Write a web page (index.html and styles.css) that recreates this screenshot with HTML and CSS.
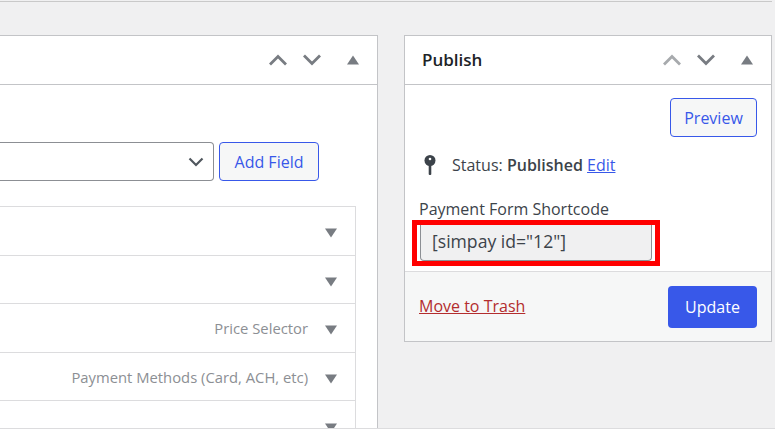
FILE: index.html
```html
<!DOCTYPE html>
<html lang="en">
<head>
<meta charset="utf-8">
<title>Payment Form</title>
<link rel="stylesheet" href="styles.css">
</head>
<body>
<div class="topline"></div>
<main class="columns">
  <section class="panel main-panel">
    <header class="panel-head">
      <div class="controls">
        <svg class="ctl" viewBox="0 0 20 12"><path d="M2 10.5 10 2.5 18 10.5" /></svg>
        <svg class="ctl" viewBox="0 0 20 12"><path d="M2 1.5 10 9.5 18 1.5" /></svg>
        <svg class="tri" viewBox="0 0 12 10"><path d="M6 .5 12 9.5H0Z" /></svg>
      </div>
    </header>
    <div class="main-body">
      <div class="field-add">
        <div class="select"><svg class="sel-chev" viewBox="0 0 16 10"><path d="M1.500 1.500 8 8 14.500 1.500" /></svg></div>
        <button class="btn btn-outline add-field">Add Field</button>
      </div>
      <div class="rows">
        <div class="row"><svg class="down" viewBox="0 0 12 10"><path d="M0 .5H12L6 9.500Z" /></svg></div>
        <div class="row"><svg class="down" viewBox="0 0 12 10"><path d="M0 .5H12L6 9.500Z" /></svg></div>
        <div class="row"><span class="row-label">Price Selector</span><svg class="down" viewBox="0 0 12 10"><path d="M0 .5H12L6 9.500Z" /></svg></div>
        <div class="row"><span class="row-label">Payment Methods (Card, ACH, etc)</span><svg class="down" viewBox="0 0 12 10"><path d="M0 .5H12L6 9.500Z" /></svg></div>
        <div class="row"><svg class="down" viewBox="0 0 12 10"><path d="M0 .5H12L6 9.500Z" /></svg></div>
      </div>
    </div>
  </section>
  <aside class="panel publish">
    <header class="panel-head">
      <h2>Publish</h2>
      <div class="controls">
        <svg class="ctl faded" viewBox="0 0 20 12"><path d="M2 10.5 10 2.5 18 10.5" /></svg>
        <svg class="ctl" viewBox="0 0 20 12"><path d="M2 1.5 10 9.5 18 1.5" /></svg>
        <svg class="tri" viewBox="0 0 12 10"><path d="M6 .5 12 9.5H0Z" /></svg>
      </div>
    </header>
    <div class="publish-body">
      <div class="preview-row"><button class="btn btn-outline preview">Preview</button></div>
      <div class="status">
        <svg class="pin" viewBox="0 0 12 20"><circle cx="6" cy="5.500" r="5.500" /><rect x="4.700" y="8" width="2.600" height="12" rx="1" /><circle class="pin-hole" cx="6" cy="4" r="1.300" /></svg>
        <span>Status: <b>Published</b> <a href="#">Edit</a></span>
      </div>
      <label class="sc-label">Payment Form Shortcode</label>
      <div class="highlight"><div class="sc-input">[simpay id="12"]</div></div>
    </div>
    <footer class="publish-foot">
      <a class="trash" href="#">Move to Trash</a>
      <button class="btn update">Update</button>
    </footer>
  </aside>
</main>
</body>
</html>
```
FILE: styles.css
```css
* { box-sizing: border-box; }
html, body { margin: 0; height: 429px; overflow: hidden; }
body {
  background: #f0f0f1;
  font-family: "Open Sans", "Noto Sans", sans-serif;
  font-size: 16px;
  color: #3c434a;
  border-bottom: 1px solid #dcdcde;
}
.topline { height: 2px; background: #c9c9c9; border-top: 1px solid #f0f0f1; margin-right: 3px; }
.columns { display: flex; align-items: flex-start; gap: 26px; padding: 33px 3px 0 0; }
.panel { background: #fff; border: 1px solid #c3c4c7; }
.main-panel { width: 378px; height: 400px; border-left: 0; border-bottom: 0; overflow: hidden; }
.publish { width: 368px; }
.panel-head {
  display: flex; align-items: center; justify-content: flex-end;
  height: 49px; padding: 0 18px 1px 17px;
  border-bottom: 1px solid #c3c4c7;
}
.panel-head h2 { margin: 0 auto 0 0; font-size: 17px; font-weight: 600; color: #1d2327; }
.controls { display: flex; align-items: center; }
.ctl { width: 20px; height: 12px; margin-right: 14px; fill: none; stroke: #787c82; stroke-width: 2.800; }
.ctl.faded { stroke: #a7aaad; }
.ctl + .ctl { margin-right: 25px; }
.tri { width: 12px; height: 10px; fill: #787c82; }
.main-body { padding: 57px 21px 0 0; }
.field-add { display: flex; gap: 5px; margin-right: 37px; }
.select {
  flex: 1; height: 39px; display: flex; align-items: center; justify-content: flex-end; padding-right: 9px;
  border: 1px solid #8c8f94; border-left: 0; border-radius: 0 4px 4px 0;
}
.sel-chev { width: 16px; height: 10px; fill: none; stroke: #50575e; stroke-width: 2.200; }
.btn { font: inherit; font-size: 16px; border-radius: 4px; height: 39px; padding: 0; }
.btn-outline { background: #f6f7f7; color: #3858e9; border: 1px solid #3858e9; }
.add-field { width: 100px; }
.rows { margin-top: 25px; border: 1px solid #dcdcde; border-left: 0; border-bottom: 0; }
.row {
  display: flex; align-items: center; justify-content: flex-end; gap: 17px;
  height: 48.600px; padding: 5px 18px 0 0; border-bottom: 1px solid #dcdcde;
  color: #8c8f94;
}
.row-label { font-size: 14.800px; margin-top: -4px; }
.down { width: 12px; height: 10px; fill: #787c82; }
.publish-body { padding: 13px 14px 0 15px; }
.preview-row { display: flex; justify-content: flex-end; }
.preview { width: 87px; }
.status { display: flex; align-items: center; gap: 16px; margin: 16px 0 0 4px; height: 24px; }
.pin { width: 12px; height: 20px; fill: #3c434a; }
.pin-hole { fill: #fff; }
.status b { font-weight: 600; }
.status a { color: #3858e9; }
.sc-label { display: block; margin: 22px 0 0 -1px; line-height: 21px; }
.highlight { width: 248px; margin: 0 0 0 -8px; height: 46px; border: 5px solid #ff0000; background: #fff; padding: 0 3px; }
.sc-input {
  height: 36px; background: #f0f0f1; border: 1px solid #8c8f94; border-top: 0; border-radius: 0 0 4px 4px;
  padding: 0 0 4px 11px; font-size: 17.600px; line-height: 32px;
}
.publish-foot {
  display: flex; align-items: center; justify-content: space-between;
  margin-top: 5px; height: 70px; padding: 0 14px 0 14px;
  background: #f6f7f7; border-top: 1px solid #dcdcde;
}
.trash { color: #b32d2e; margin-top: -2px; }
.update { width: 89px; height: 42px; background: #3858e9; color: #fff; border: 0; font-weight: 500; }
```
